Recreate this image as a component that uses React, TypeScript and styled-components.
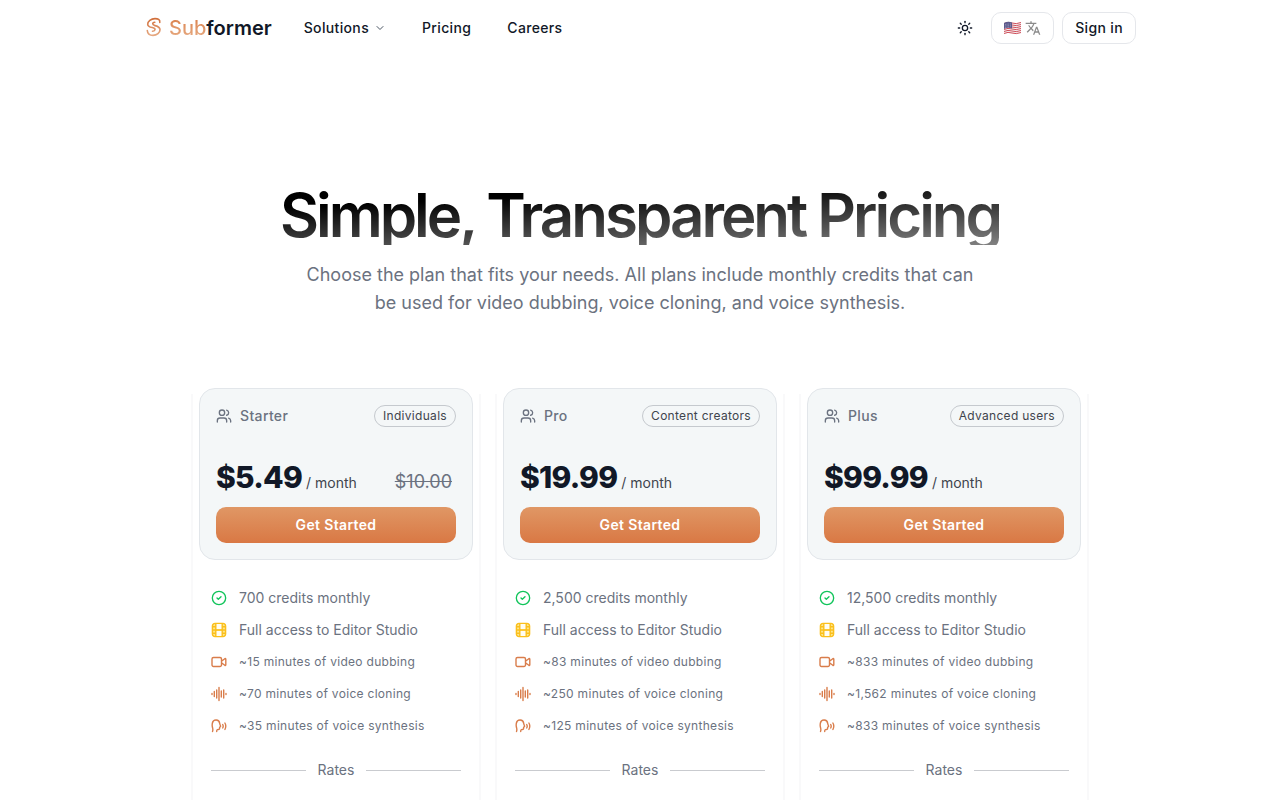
import React from "react";
import styled, { createGlobalStyle } from "styled-components";
import { ChevronDown, Sun, Users, CircleCheck } from "lucide-react";
import { MdTranslate } from "react-icons/md";

const GlobalStyle = createGlobalStyle`
  *, *::before, *::after { box-sizing: border-box; }
  body { margin: 0; background: #fff; color: #111827; font-family: Inter, "Liberation Sans", sans-serif; overflow-x: hidden; }
  button, a { font: inherit; letter-spacing: inherit; color: inherit; text-decoration: none; }
  h1, h2, p, ul { margin: 0; padding: 0; }
`;

const Header = styled.header`
  display: flex;
  align-items: center;
  max-width: 992px;
  height: 56px;
  margin: 0 auto;
`;

const Brand = styled.a`
  display: flex;
  align-items: center;
  gap: 6px;
  margin-right: 32px;
  font-size: 20px;
  font-weight: 600;
  line-height: 28px;
`;

const Accent = styled.span`
  font-weight: 500;
  color: transparent;
  background: linear-gradient(180deg, #d97b45, #e8b18a);
  background-clip: text;
`;

const Nav = styled.nav`
  display: flex;
  flex: 1;
  gap: 36px;
  font-size: 14px;
  font-weight: 500;
  line-height: 20px;
  letter-spacing: 0.025em;
`;

const NavLink = styled.a`
  display: flex;
  align-items: center;
`;

const NavMenu = styled.button`
  display: flex;
  align-items: center;
  gap: 5px;
  padding: 0;
  border: 0;
  background: none;
  svg { color: #4b5563; }
`;

const Tools = styled.div`
  display: flex;
  align-items: center;
  gap: 8px;
`;

const IconButton = styled.button`
  display: grid;
  place-items: center;
  width: 36px;
  height: 32px;
  padding: 0;
  border: 0;
  background: none;
`;

const OutlineButton = styled.button`
  display: flex;
  align-items: center;
  gap: 4px;
  height: 32px;
  padding: 0 12px;
  border: 1px solid #e5e7eb;
  border-radius: 10px;
  background: #fff;
  font-size: 14px;
  font-weight: 500;
  line-height: 20px;
  letter-spacing: 0.025em;
`;

const Hero = styled.section`
  padding: 129px 0 0;
  text-align: center;
`;

const Title = styled.h1`
  color: transparent;
  background: linear-gradient(to bottom right, #000 30%, rgba(0, 0, 0, 0.4));
  background-clip: text;
  font-size: 60px;
  font-weight: 600;
  line-height: 60px;
  letter-spacing: -0.05em;
`;

const Lead = styled.p`
  max-width: 672px;
  margin: 16px auto 0;
  color: #6b7280;
  font-size: 18px;
  line-height: 28px;
`;

const Plans = styled.main`
  display: grid;
  grid-template-columns: repeat(auto-fit, minmax(260px, 1fr));
  gap: 14px;
  max-width: 898px;
  margin: 71px auto 0;
`;

const Plan = styled.article`
  padding: 0 8px 24px;
  background:
    linear-gradient(#f9f9fa, #f9f9fa) left 6px / 2px 100% no-repeat,
    linear-gradient(#f9f9fa, #f9f9fa) right 6px / 2px 100% no-repeat;
`;

const Summary = styled.div`
  padding: 16px;
  border: 1px solid #e2e6ea;
  border-radius: 16px;
  background: #f4f7f8;
`;

const PlanHead = styled.div`
  display: flex;
  align-items: center;
  gap: 8px;
  height: 22px;
  color: #6b7280;
`;

const PlanName = styled.h2`
  flex: 1;
  font-size: 14px;
  font-weight: 500;
  line-height: 20px;
  letter-spacing: 0.025em;
`;

const Tag = styled.span`
  padding: 2px 8px;
  border: 1px solid #c5c9ce;
  border-radius: 11px;
  color: #3f444d;
  font-size: 12px;
  line-height: 16px;
  letter-spacing: 0.025em;
`;

const PriceRow = styled.div`
  display: flex;
  align-items: baseline;
  gap: 4px;
  height: 40px;
  margin: 30px 0 10px;
`;

const Price = styled.span`
  font-size: 30px;
  font-weight: 800;
  line-height: 40px;
  letter-spacing: -0.025em;
`;

const Period = styled.span`
  color: #3f444d;
  font-size: 14px;
`;

const OldPrice = styled.s`
  margin-left: auto;
  padding-right: 4px;
  color: #6b7280;
  font-size: 18px;
`;

const StartButton = styled.button`
  width: 100%;
  height: 36px;
  border: 0;
  border-radius: 10px;
  color: #fff;
  background: linear-gradient(#e09765, #d97844);
  font-size: 14px;
  font-weight: 600;
  line-height: 20px;
  letter-spacing: 0.025em;
`;

const Features = styled.ul`
  display: grid;
  gap: 12px;
  padding: 28px 12px 0;
  list-style: none;
  color: #6b7280;
`;

const Feature = styled.li<{ $small?: boolean }>`
  display: flex;
  align-items: center;
  gap: 12px;
  font-size: ${(p) => (p.$small ? 12 : 14)}px;
  line-height: 20px;
  letter-spacing: ${(p) => (p.$small ? "0.025em" : "normal")};
`;

const Rates = styled.div`
  display: flex;
  align-items: center;
  gap: 12px;
  margin: 24px 12px 0;
  color: #6b7280;
  font-size: 14px;
  line-height: 20px;
  &::before, &::after { content: ""; flex: 1; height: 1px; background: #c9cbcf; }
`;

const Logo = () => (
  <svg width="19" height="22" viewBox="0 0 19 22" fill="none" strokeWidth="1.6" strokeLinecap="round" aria-hidden="true">
    <defs>
      <linearGradient id="logo" x1="0" y1="0" x2="0" y2="22" gradientUnits="userSpaceOnUse">
        <stop stopColor="#cf6a35" />
        <stop offset="1" stopColor="#eab48f" />
      </linearGradient>
    </defs>
    <path stroke="url(#logo)" d="M15.800 5.500C16.200 2.500 14 1.600 11 1.600C7 1.600 3.700 4.200 3.700 7.200C3.700 10 6.500 10.200 9 10.700C12 11.400 11.500 14.300 8.500 14.200" />
    <path stroke="url(#logo)" d="M3.300 13.500C3.500 16.800 5.500 18.400 9 18.400C13 18.400 16 15.800 16 12.800C16 9.800 13.500 9.200 11 8.600C8 7.900 8 5.600 10.800 5.300" />
  </svg>
);

const Flag = () => (
  <svg width="17" height="14" viewBox="0 0 17 14" role="img" aria-label="United States">
    <path fill="#f4eff0" d="M0 2Q4 0 8 1.500T17 1V12Q13 13.500 8 12.500T0 13Z" />
    <path fill="none" stroke="#d0505c" d="M0 2.500Q4 .5 8 2T17 1.500M0 4.500Q4 2.500 8 4T17 3.500M0 6.500Q4 4.500 8 6T17 5.500M0 8.500Q4 6.500 8 8T17 7.500M0 10.500Q4 8.500 8 10T17 9.500M0 12.500Q4 10.500 8 12T17 11.500" />
    <path fill="#5c5a8c" d="M0 2Q4 0 8 1.500V7.500Q4 6 0 8Z" />
    <path stroke="#b9b8d2" strokeWidth=".7" strokeDasharray=".7 1" d="M1 3.500L7 2.800M1 5L7 4.300M1 6.500L7 5.800" />
  </svg>
);

const Film = () => (
  <svg width="16" height="16" viewBox="0 0 16 16" aria-hidden="true">
    <rect x="1" y="1" width="14" height="14" rx="3" fill="#fde68a" />
    <path fill="#fffdf2" d="M5 2h6v5H5zM5 9h6v5H5z" />
    <path fill="none" stroke="#fbbf1c" strokeWidth="1.400" d="M4 1.400h8a2.600 2.600 0 0 1 2.600 2.600v8a2.600 2.600 0 0 1-2.600 2.600H4A2.600 2.600 0 0 1 1.400 12V4A2.600 2.600 0 0 1 4 1.400ZM4.800 1.500v13M11.200 1.500v13M1.500 8h13M1.500 4.800h3M1.500 11.200h3M11.500 4.800h3M11.500 11.200h3" />
  </svg>
);

const StrokeIcon = ({ d }: { d: string }) => (
  <svg width="16" height="16" viewBox="0 0 16 16" fill="none" stroke="#d97d4b" strokeWidth="1.400" strokeLinecap="round" strokeLinejoin="round" aria-hidden="true">
    <path d={d} />
  </svg>
);

const VIDEO = "M2.500 3.500h6.500a1.500 1.500 0 0 1 1.500 1.500v6a1.500 1.500 0 0 1-1.500 1.500H2.500A1.500 1.500 0 0 1 1 11V5a1.500 1.500 0 0 1 1.500-1.500ZM10.800 7l3-2.300q1-.5 1 .6v5.400q0 1.100-1 .6l-3-2.300";
const WAVE = "M1 7.500v1M3.300 5.500v5M5.700 4v8M8 1.500v13M10.300 5v6M12.700 4v8M15 7.500v1";
const SPEAK = "M1.500 13.500c.8-2 .2-3-.1-4.500C1 7.500 1.200 6 1.400 5a3.700 3.700 0 0 1 7.300.3c0 1.500 1 2.300.9 3-.1.500-.9.500-1 1 0 1.500.1 2.200-1.300 2.200-1.300 0-1.600.2-1.600 2M11.700 6.500q1 1.700 0 3.500M13.900 5q1.800 3 0 6.500";

const plans = [
  { name: "Starter", tag: "Individuals", price: "$5.49", old: "$10.00", credits: "700", dub: "15", clone: "70", synth: "35" },
  { name: "Pro", tag: "Content creators", price: "$19.99", credits: "2,500", dub: "83", clone: "250", synth: "125" },
  { name: "Plus", tag: "Advanced users", price: "$99.99", credits: "12,500", dub: "833", clone: "1,562", synth: "833" },
];

export default function App() {
  return (
    <>
      <GlobalStyle />
      <Header>
        <Brand href="#"><Logo /><span><Accent>Sub</Accent>former</span></Brand>
        <Nav>
          <NavMenu type="button">Solutions <ChevronDown size={12} /></NavMenu>
          <NavLink href="#pricing">Pricing</NavLink>
          <NavLink href="#careers">Careers</NavLink>
        </Nav>
        <Tools>
          <IconButton type="button" aria-label="Toggle theme"><Sun size={16} /></IconButton>
          <OutlineButton type="button" aria-label="Language"><Flag /><MdTranslate size={16} color="#8a8a8a" /></OutlineButton>
          <OutlineButton type="button">Sign in</OutlineButton>
        </Tools>
      </Header>
      <Hero>
        <Title>Simple, Transparent Pricing</Title>
        <Lead>Choose the plan that fits your needs. All plans include monthly credits that can be used for video dubbing, voice cloning, and voice synthesis.</Lead>
      </Hero>
      <Plans>
        {plans.map((p) => (
          <Plan key={p.name}>
            <Summary>
              <PlanHead><Users size={16} /><PlanName>{p.name}</PlanName><Tag>{p.tag}</Tag></PlanHead>
              <PriceRow>
                <Price>{p.price}</Price><Period>/ month</Period>
                {p.old && <OldPrice>{p.old}</OldPrice>}
              </PriceRow>
              <StartButton type="button">Get Started</StartButton>
            </Summary>
            <Features>
              <Feature><CircleCheck size={16} color="#10c45a" />{p.credits} credits monthly</Feature>
              <Feature><Film />Full access to Editor Studio</Feature>
              <Feature $small><StrokeIcon d={VIDEO} />~{p.dub} minutes of video dubbing</Feature>
              <Feature $small><StrokeIcon d={WAVE} />~{p.clone} minutes of voice cloning</Feature>
              <Feature $small><StrokeIcon d={SPEAK} />~{p.synth} minutes of voice synthesis</Feature>
            </Features>
            <Rates>Rates</Rates>
          </Plan>
        ))}
      </Plans>
    </>
  );
}
